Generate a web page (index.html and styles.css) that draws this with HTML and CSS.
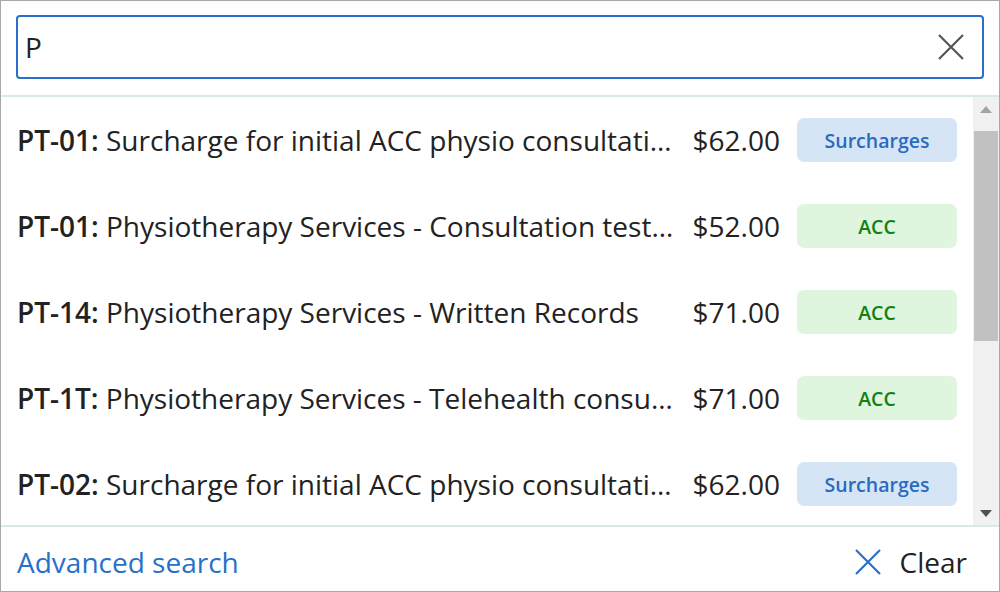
FILE: index.html
```html
<!DOCTYPE html>
<html>
<head>
<meta charset="utf-8">
<link rel="stylesheet" href="styles.css">
</head>
<body>
<div class="panel">
  <div class="search">
    <div class="input">
      <span class="query">P</span>
      <svg class="xicon" width="26" height="26" viewBox="0 0 26 26"><path d="M1 1L25 25M25 1L1 25" stroke="#555" stroke-width="2.2" fill="none"/></svg>
    </div>
  </div>
  <div class="body">
    <div class="list">
      <div class="row"><div class="desc"><b>PT-01:</b> Surcharge for initial ACC physio consultation and assessment</div><div class="price">$62.00</div><div class="badge sur">Surcharges</div></div>
      <div class="row"><div class="desc"><b>PT-01:</b> Physiotherapy Services - Consultation test and treatment</div><div class="price">$52.00</div><div class="badge acc">ACC</div></div>
      <div class="row"><div class="desc"><b>PT-14:</b> Physiotherapy Services - Written Records</div><div class="price">$71.00</div><div class="badge acc">ACC</div></div>
      <div class="row"><div class="desc"><b>PT-1T:</b> Physiotherapy Services - Telehealth consultation</div><div class="price">$71.00</div><div class="badge acc">ACC</div></div>
      <div class="row"><div class="desc"><b>PT-02:</b> Surcharge for initial ACC physio consultation and assessment</div><div class="price">$62.00</div><div class="badge sur">Surcharges</div></div>
    </div>
    <div class="scrollbar">
      <div class="arrow up"></div>
      <div class="track"><div class="thumb"></div></div>
      <div class="arrow down"></div>
    </div>
  </div>
  <div class="footer">
    <span class="adv">Advanced search</span>
    <span class="clear"><svg width="26" height="26" viewBox="0 0 26 26"><path d="M1 1L25 25M25 1L1 25" stroke="#2a6fc9" stroke-width="2.2" fill="none"/></svg>Clear</span>
  </div>
</div>
</body>
</html>
```
FILE: styles.css
```css
* { box-sizing: border-box; }
html, body { margin: 0; padding: 0; background: #fff; }
body { font-family: "Open Sans", "Noto Sans", "Liberation Sans", sans-serif; color: #222; }
.panel {
  width: 1000px; height: 592px;
  border: 1px solid #a8a8a8;
  display: flex; flex-direction: column;
  overflow: hidden;
}
.search {
  height: 96px;
  padding: 14px 15px 0 15px;
  border-bottom: 2px solid #d5ebeb;
}
.input {
  height: 64px;
  border: 2px solid #2a6fc9;
  border-radius: 4px;
  display: flex; align-items: center; justify-content: space-between;
  padding: 0 18px 0 7px;
}
.query { font-size: 28px; line-height: 1; color: #222; }
.xicon { display: block; }
.body {
  height: 430px;
  display: flex;
  border-bottom: 2px solid #d5ebeb;
}
.list { flex: 1; overflow: hidden; }
.row {
  height: 86px;
  display: flex; align-items: center;
  padding: 0 16px 0 16px;
}
.desc {
  flex: 1; min-width: 0;
  white-space: nowrap; overflow: hidden; text-overflow: ellipsis;
  font-size: 28px;
  margin-right: 15px;
}
.desc b { font-weight: 600; }
.price { font-size: 28px; margin-right: 17px; }
.badge {
  width: 160px; height: 44px;
  border-radius: 7px;
  display: flex; align-items: center; justify-content: center;
  font-size: 19.5px; font-weight: 600;
}
.badge.sur { background: #d5e5f6; color: #2a6bbf; }
.badge.acc { background: #dff5dd; color: #138013; }
.scrollbar {
  width: 26px;
  background: #f1f1f1;
  display: flex; flex-direction: column;
}
.arrow { height: 34px; display: flex; align-items: center; justify-content: center; }
.arrow::before { content: ""; width: 0; height: 0; border-left: 6px solid transparent; border-right: 6px solid transparent; }
.arrow.up::before { border-bottom: 7px solid #a3a3a3; margin-top: -10px; }
.arrow.down::before { border-top: 7px solid #505050; margin-top: 10px; }
.track { flex: 1; padding: 0 1px; }
.thumb { height: 210px; background: #c1c1c1; }
.footer {
  flex: 1;
  display: flex; align-items: center; justify-content: space-between;
  padding: 5px 32px 0 16px;
  font-size: 28px;
}
.adv { color: #2a6fc9; }
.clear { display: flex; align-items: center; gap: 19px; color: #222; }
.clear svg { display: block; }
```
